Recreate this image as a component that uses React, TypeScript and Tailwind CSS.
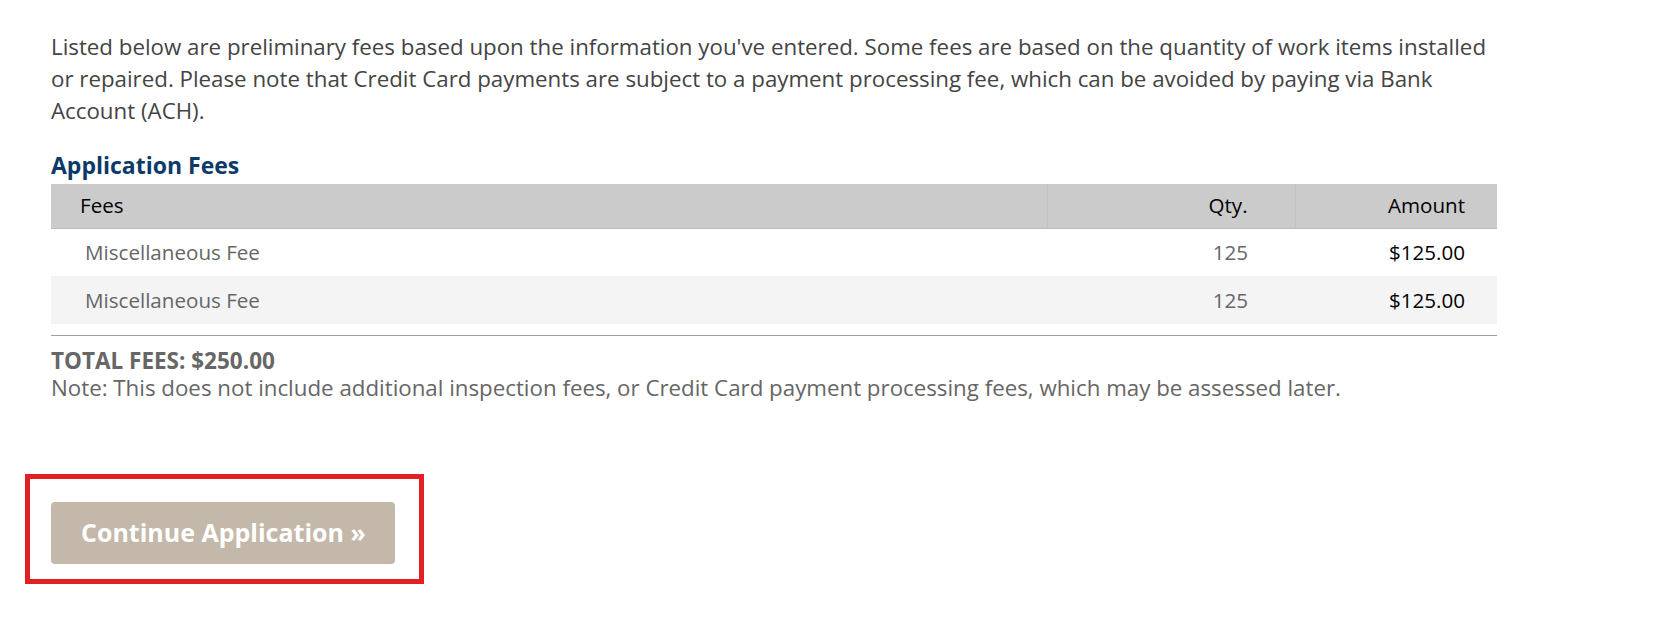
const fees = [
  { name: 'Miscellaneous Fee', qty: 125, amount: '$125.00' },
  { name: 'Miscellaneous Fee', qty: 125, amount: '$125.00' },
];

export default function App() {
  return (
    <div className="min-h-screen bg-white font-['Open_Sans','Noto_Sans',sans-serif]">
      <div className="w-[1446px] ml-[51px] pt-[31px]">
        <p className="text-[22.3px] leading-[32px] text-[#444444]">
          Listed below are preliminary fees based upon the information you've entered. Some fees are based on the quantity of work items installed or repaired. Please note that Credit Card payments are subject to a payment processing fee, which can be avoided by paying via Bank Account (ACH).
        </p>

        <h2 className="mt-[23px] text-[23px] leading-[30px] font-bold text-[#0b3a6a]">Application Fees</h2>

        <table className="mt-[4px] w-full border-collapse text-[20.6px]">
          <thead>
            <tr className="h-[44px] bg-[#cbcbcb] text-black border-b border-[#bdbdbd]">
              <th className="w-[997px] pl-[29px] text-left font-normal">Fees</th>
              <th className="w-[248px] pr-[47px] text-right font-normal border-l border-[#c2c2c2]">Qty.</th>
              <th className="w-[202px] pr-[32px] text-right font-normal border-l border-[#c2c2c2]">Amount</th>
            </tr>
          </thead>
          <tbody>
            {fees.map((fee, i) => (
              <tr key={i} className={i % 2 === 1 ? 'h-[48px] bg-[#f4f4f4]' : 'h-[48px] bg-white'}>
                <td className="pl-[34px] text-[#666666]">{fee.name}</td>
                <td className="pr-[47px] text-right text-[#666666]">{fee.qty}</td>
                <td className="pr-[32px] text-right text-black">{fee.amount}</td>
              </tr>
            ))}
          </tbody>
        </table>

        <div className="mt-[11px] border-t border-[#a0a0a0] pt-[11px] text-[#666666]">
          <div className="text-[22.5px] leading-[27px] font-bold">TOTAL FEES: $250.00</div>
          <div className="text-[22.3px] leading-[27px]">
            Note: This does not include additional inspection fees, or Credit Card payment processing fees, which may be assessed later.
          </div>
        </div>
      </div>

      <div className="ml-[25px] mt-[73px] inline-block border-[5px] border-[#e31e24] pl-[21px] pt-[23px] pr-[24px] pb-[15px]">
        <button className="h-[62px] w-[344px] rounded-[4px] bg-[#c4b8aa] pl-[30px] text-left text-[25px] font-bold text-white">
          Continue Application »
        </button>
      </div>
    </div>
  );
}
